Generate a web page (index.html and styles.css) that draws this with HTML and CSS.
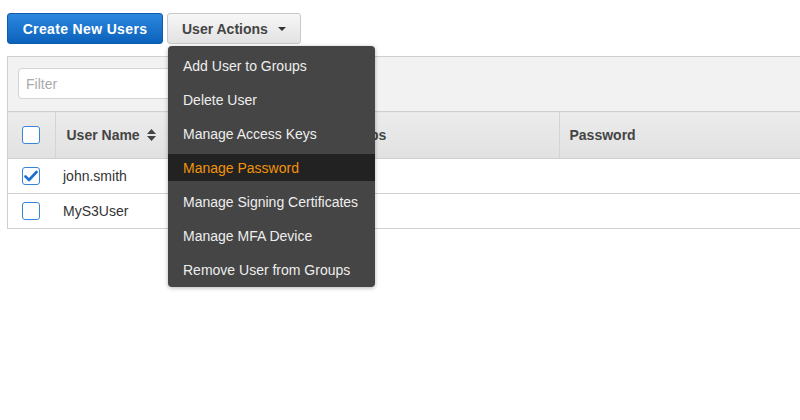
FILE: index.html
```html
<!DOCTYPE html>
<html>
<head>
<meta charset="utf-8">
<link rel="stylesheet" href="styles.css">
</head>
<body>
<div class="page">
  <div class="actions">
    <button class="btn btn-primary">Create New Users</button>
    <div class="dropdown">
      <button class="btn btn-default">User Actions <span class="caret"></span></button>
      <ul class="menu">
        <li>Add User to Groups</li>
        <li>Delete User</li>
        <li>Manage Access Keys</li>
        <li class="active">Manage Password</li>
        <li>Manage Signing Certificates</li>
        <li>Manage MFA Device</li>
        <li>Remove User from Groups</li>
      </ul>
    </div>
  </div>
  <div class="panel">
    <div class="toolbar">
      <input class="filter" type="text" placeholder="Filter">
    </div>
    <table class="grid">
      <thead>
        <tr>
          <th class="c-check"><span class="cb"></span></th>
          <th class="c-name">User Name <svg class="sort" width="9" height="12" viewBox="0 0 9 12"><path d="M4.5 0 L9 5 H0 Z M0 7 H9 L4.5 12 Z" fill="#444"/></svg></th>
          <th class="c-groups">Groups</th>
          <th class="c-pass">Password</th>
        </tr>
      </thead>
      <tbody>
        <tr>
          <td class="c-check"><span class="cb checked"><svg width="14" height="12" viewBox="0 0 14 12"><path d="M1.5 6.5 L5 10 L12.5 2" fill="none" stroke="#1f6fd0" stroke-width="2.6" stroke-linecap="round" stroke-linejoin="round"/></svg></span></td>
          <td>john.smith</td>
          <td></td>
          <td></td>
        </tr>
        <tr>
          <td class="c-check"><span class="cb"></span></td>
          <td>MyS3User</td>
          <td></td>
          <td></td>
        </tr>
      </tbody>
    </table>
  </div>
</div>
</body>
</html>
```

FILE: styles.css
```css
* { box-sizing: border-box; }
html, body { margin: 0; padding: 0; background: #fff; }
body {
  font-family: "Liberation Sans", Arial, sans-serif;
  font-size: 14px;
  color: #333;
  min-height: 420px;
}
.page { padding: 13px 0 0 7px; min-height: 420px; }
.actions {
  display: flex;
  gap: 4px;
  height: 31px;
}
.btn {
  font-family: inherit;
  font-size: 14px;
  font-weight: bold;
  height: 31px;
  border-radius: 3px;
  padding: 0 14px;
  margin: 0;
  cursor: pointer;
  white-space: nowrap;
}
.btn-primary {
  width: 156px;
  color: #fff;
  border: 1px solid #0f5cac;
  background: linear-gradient(#2c87dd, #0c62bb);
  letter-spacing: 0.35px;
  padding: 0 10px;
}
.btn-default {
  width: 134px;
  color: #444;
  border: 1px solid #c8c8c8;
  background: linear-gradient(#f7f7f7, #e2e2e2);
  text-align: left;
}
.caret {
  display: inline-block;
  width: 0; height: 0;
  border-left: 4px solid transparent;
  border-right: 4px solid transparent;
  border-top: 4px solid #333;
  vertical-align: middle;
  margin-left: 6px;
  position: relative;
  top: -1px;
}
.dropdown { position: relative; }
.menu {
  position: absolute;
  z-index: 10;
  left: 1px;
  top: 33px;
  width: 207px;
  margin: 0;
  padding: 6px 0 4px;
  list-style: none;
  background: #454545;
  border-radius: 4px;
  box-shadow: 0 1px 4px rgba(0,0,0,0.3);
}
.menu li {
  height: 27px;
  line-height: 28px;
  padding: 0 15px;
  color: #eee;
  white-space: nowrap;
  margin-bottom: 7px;
}
.menu li:last-child { margin-bottom: 0; }
.menu li.active {
  background: #222;
  color: #f0930a;
}
.panel {
  margin-top: 12px;
  border-top: 1px solid #cfcfcf;
  border-left: 1px solid #cfcfcf;
}
.toolbar {
  background: #f2f2f2;
  height: 54px;
  padding: 11px 0 0 10px;
}
.filter {
  width: 260px;
  height: 31px;
  border: 1px solid #d4d4d4;
  border-radius: 4px;
  background: #fff;
  font-family: inherit;
  font-size: 14px;
  padding: 0 7px;
  color: #333;
}
.filter::placeholder { color: #aaa; }
.grid {
  width: 100%;
  border-collapse: collapse;
}
.grid th {
  height: 47px;
  text-align: left;
  font-weight: bold;
  color: #444;
  background: linear-gradient(#ececec, #e1e1e1);
  border-top: 1px solid #cfcfcf;
  border-bottom: 1px solid #cfcfcf;
  border-left: 1px solid #d4d4d4;
  padding: 0 10px;
}
.grid th:first-child { border-left: none; }
.grid td {
  height: 35px;
  border-bottom: 1px solid #cfcfcf;
  padding: 0 8px;
  color: #333;
}
.c-check { width: 47px; text-align: left; padding: 0 0 0 14px !important; }
.grid th.c-name { width: 271px; padding-left: 11px; }
.grid th.c-groups { width: 233px; }
.grid th.c-pass { padding-left: 10px; }
.sort { vertical-align: -1px; margin-left: 3px; }
.cb {
  display: inline-block;
  width: 18px;
  height: 18px;
  border: 1px solid #3a84d6;
  border-radius: 3px;
  background: #fff;
  vertical-align: middle;
  position: relative;
}
.cb svg { position: absolute; left: 1px; top: 2px; }
```
